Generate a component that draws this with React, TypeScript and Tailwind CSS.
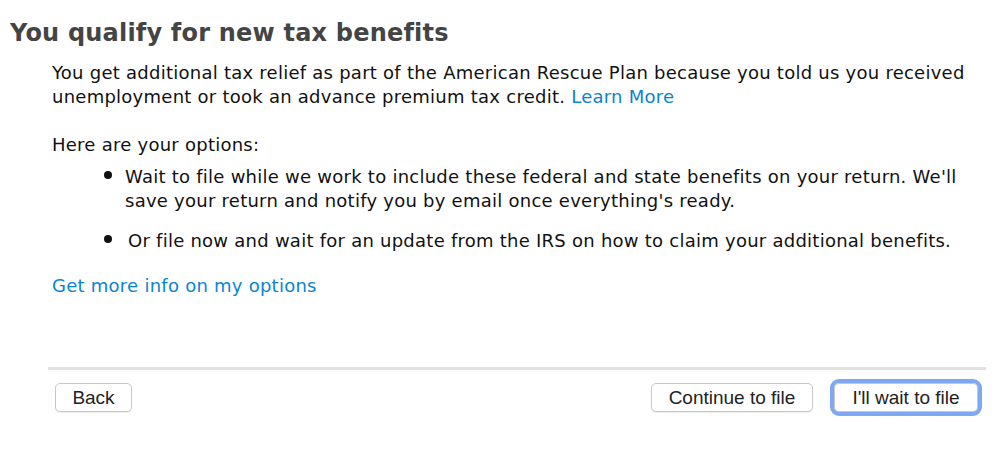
import React from "react";

const bullets: string[][] = [
    [
        "Wait to file while we work to include these federal and state benefits on your return. We'll",
        "save your return and notify you by email once everything's ready.",
    ],
    ["Or file now and wait for an update from the IRS on how to claim your additional benefits."],
];

const Button: React.FC<{ label: string; width: string; focused?: boolean }> = ({ label, width, focused }) => (
    <button
        className={`${width} h-[29px] rounded-[5px] border border-[#c8c8c8] bg-white text-[19px] leading-none text-[#222] shadow-[0_1px_1px_rgba(0,0,0,0.08)] ${focused ? "outline outline-[4px] outline-[#7fa8f2]" : ""}`}
        style={{ fontFamily: "'Liberation Sans', Arial, sans-serif" }}
    >
        {label}
    </button>
);

export default function App() {
    return (
        <div
            className="w-[999px] h-[457px] bg-white text-[#111] overflow-hidden"
            style={{ fontFamily: "'DejaVu Sans', Verdana, sans-serif" }}
        >
            <h1 className="pl-[10px] pt-[18px] text-[24px] tracking-[0.2px] font-bold text-[#444] leading-[30px]">
                You qualify for new tax benefits
            </h1>

            <div className="pl-[52px] pr-4 mt-[13px] text-[18px] tracking-[0.25px] leading-[24px]">
                <p>
                    You get additional tax relief as part of the American Rescue Plan because you told us you received
                    <br />
                    unemployment or took an advance premium tax credit.{" "}
                    <a className="text-[#0a84d0]">Learn More</a>
                </p>

                <p className="mt-[24px]">Here are your options:</p>

                <ul className="mt-[8px] flex flex-col gap-[16px]">
                    {bullets.map((lines, i) => (
                        <li key={i} className="flex">
                            <span className="w-[73px] shrink-0 pl-[52px] pt-[6px]">
                                <span className="block w-[8px] h-[8px] rounded-full bg-[#111]" />
                            </span>
                            <span className={i === 1 ? "pl-[3px]" : ""}>
                                {lines.map((line, j) => (
                                    <span key={j} className="block">
                                        {line}
                                    </span>
                                ))}
                            </span>
                        </li>
                    ))}
                </ul>

                <a className="block mt-[21px] text-[#0a84d0]">Get more info on my options</a>
            </div>

            <div className="ml-[48px] mr-[13px] mt-[69px] h-[3px] bg-[#e1e1e1]" />

            <div className="flex items-center justify-between pl-[55px] pr-[21px] mt-[13px]">
                <Button label="Back" width="w-[77px]" />
                <div className="flex items-center gap-[21px]">
                    <Button label="Continue to file" width="w-[162px]" />
                    <Button label="I'll wait to file" width="w-[144px]" focused />
                </div>
            </div>
        </div>
    );
}
